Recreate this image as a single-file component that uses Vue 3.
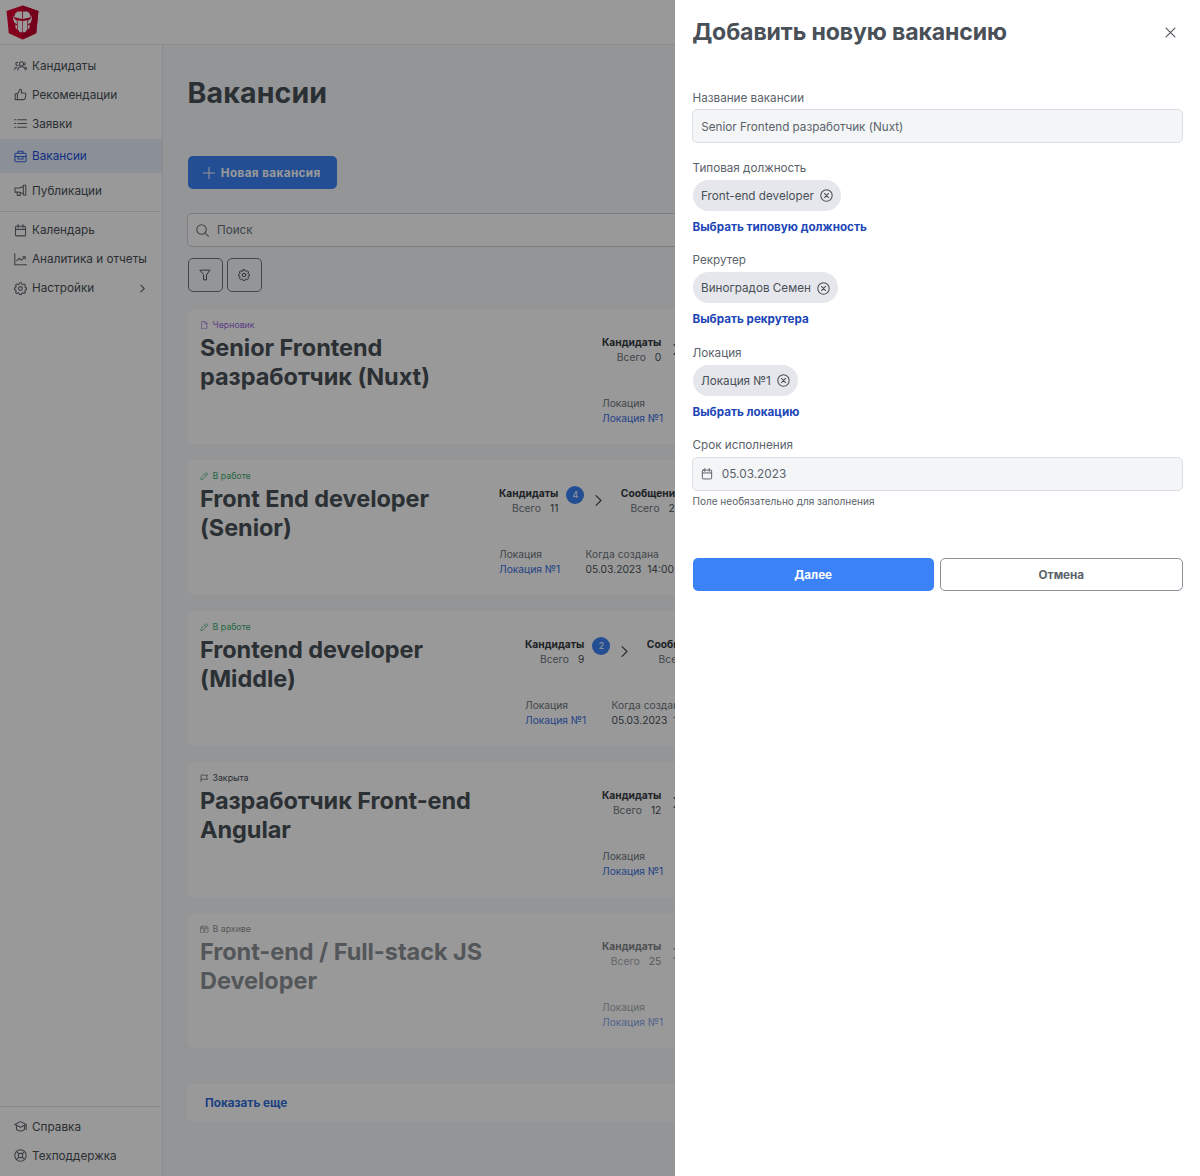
<script setup>
import { h } from 'vue'

const paths = {
  users: '<circle cx="9.200" cy="6" r="2.500"/><path d="M4.600 13.600c0-2.700 1.900-4 4.600-4s4.600 1.300 4.600 4M4.600 4.200a1.900 1.900 0 1 0 .3 3.600M13 4.200a1.900 1.900 0 0 1 0 3.200M3.400 10.200c-1.600.2-2.600 1-2.600 2.600M14 10.200c1 .4 1.500 1.200 1.500 2.200"/>',
  thumb: '<path d="M1.500 7h2.700v7.300H1.500zM4.200 7.400 7.300 1.500c1.500 0 2.200 1 2 2.200L8.900 6.200h4c1.200 0 1.900.9 1.700 2l-.9 4.600c-.2 1-.8 1.500-1.800 1.500H4.200"/>',
  list: '<path d="M4.500 3.500h11M4.500 8h11M4.500 12.500h11M.8 3.500h1.400M.8 8h1.400M.8 12.500h1.400"/>',
  briefcase: '<rect x="1.200" y="4" width="13.600" height="10.500" rx="1.300"/><path d="M5 4V1.500h6V4M1.200 8h13.600M5 8v3h6V8"/>',
  megaphone: '<path d="M11.500 3 6.500 5H1.200v5h5.300l5 2zM11.500 1.500h3v12h-3zM3.500 10l.8 4h3.400V10.400"/>',
  calendar: '<rect x="1.800" y="2.800" width="12.400" height="11.800" rx="1.200"/><path d="M1.800 6.600h12.400M5 .8v3.600M11 .8v3.600"/>',
  chart: '<path d="M1 1v13.500h14.500M3.500 9.500l3-3 2.800 2.300 4.200-4M10.800 4.500h3v3"/>',
  cog: '<circle cx="8" cy="8" r="2.300"/><path d="M6.800 1h2.400l.5 1.700 1.200.5 1.600-.9 1.700 1.700-.9 1.600.5 1.200 1.700.5v1.900l-1.700.5-.5 1.200.9 1.600-1.700 1.700-1.600-.9-1.200.5-.5 1.700H6.800l-.5-1.700-1.200-.5-1.600.9-1.700-1.700.9-1.600-.5-1.200L.5 9.200V7.300l1.700-.5.5-1.200L1.800 4l1.700-1.700 1.600.9 1.200-.5z"/>',
  cap: '<path d="M8 2 1 5.500 8 9l7-3.500zM3 7v4.500c2.800 2.800 7.200 2.800 10 0V7M15 5.500V12"/>',
  support: '<circle cx="8" cy="8" r="7"/><rect x="5.400" y="5.400" width="5.200" height="5.200" rx="1.800"/><path d="m3.200 3.200 2.700 2.700M12.800 3.200l-2.700 2.700M3.200 12.800l2.700-2.700M12.800 12.800l-2.700-2.700"/>',
  chevron: '<path d="m5 2 6 6-6 6"/>',
  plus: '<path d="M8 .5v15M.5 8h15"/>',
  search: '<circle cx="6.800" cy="6.800" r="5.800"/><path d="m11 11 4.300 4.300"/>',
  filter: '<path d="M1.500 1.500h13L9.900 8v6.500H6.100V8z"/>',
  file: '<path d="M9.500 1.200H3v13.600h10V4.700zM9 1.500V5h4"/>',
  pencil: '<path d="M2 14l.7-4L10.500 2.200c1-.9 2.200-.8 3 .1.900.9.900 2 .1 2.900L5.800 13.200zM8.800 4l3 3"/>',
  flag: '<path d="M2 15V2c4-1.500 6.500 1.500 12 0l-2 4 2 4c-5.500 1.500-8-1.500-12 0"/>',
  archive: '<rect x="1" y="3.600" width="14" height="11" rx="1"/><path d="M1 7h14M4.500 1v4M11.500 1v4M8 7v5M6 10l2 2 2-2"/>',
  times: '<path d="m1.500 1.500 13 13M14.500 1.500l-13 13"/>',
  timesCircle: '<circle cx="8" cy="8" r="7"/><path d="m5.500 5.500 5 5M10.500 5.500l-5 5"/>'
}

const Icon = (props) =>
  h('svg', { class: 'icon', viewBox: '0 0 16 16', innerHTML: paths[props.name] })
Icon.props = ['name']

const mainNav = [
  { icon: 'users', text: 'Кандидаты' },
  { icon: 'thumb', text: 'Рекомендации' },
  { icon: 'list', text: 'Заявки' },
  { icon: 'briefcase', text: 'Вакансии', active: true },
  { icon: 'megaphone', text: 'Публикации' }
]
const extraNav = [
  { icon: 'calendar', text: 'Календарь' },
  { icon: 'chart', text: 'Аналитика и отчеты' },
  { icon: 'cog', text: 'Настройки', nested: true }
]
const helpNav = [
  { icon: 'cap', text: 'Справка' },
  { icon: 'support', text: 'Техподдержка' }
]

const vacancies = [
  { status: 'draft', icon: 'file', label: 'Черновик', title: ['Senior Frontend', 'разработчик (Nuxt)'], total: 0 },
  { status: 'work', icon: 'pencil', label: 'В работе', title: ['Front End developer', '(Senior)'], total: 11, fresh: 4, messages: 25, size: 'wide' },
  { status: 'work', icon: 'pencil', label: 'В работе', title: ['Frontend developer', '(Middle)'], total: 9, fresh: 2, messages: 12, size: 'medium' },
  { status: 'closed', icon: 'flag', label: 'Закрыта', title: ['Разработчик Front-end', 'Angular'], total: 12 },
  { status: 'archived', icon: 'archive', label: 'В архиве', title: ['Front-end / Full-stack JS', 'Developer'], total: 25 }
]

const pickers = [
  { label: 'Типовая должность', value: 'Front-end developer', action: 'Выбрать типовую должность' },
  { label: 'Рекрутер', value: 'Виноградов Семен', action: 'Выбрать рекрутера' },
  { label: 'Локация', value: 'Локация №1', action: 'Выбрать локацию' }
]
</script>

<template>
  <div class="app">
    <header class="topbar">
      <svg class="logo" viewBox="0 0 32 34">
        <path fill="#dd0031" d="M16 .5 31.500 5.800 29.300 27.500 16 33.500 2.700 27.500.5 5.800z" />
        <path fill="#c3002f" d="M16 .5 31.500 5.800 29.300 27.500 16 33.500z" />
        <path fill="#fff" d="M15.600 6.300v7.200L8 12l.8-3.600 2.400-2.100zM16.400 6.300v7.200L24 12l-.8-3.600-2.400-2.100zM7.200 9.800l.7 3.400 2.700 2v3.400l-2.500-1.300-1.200-3.500zM24.800 9.800l-.7 3.400-2.700 2v3.400l2.500-1.300 1.200-3.500zM11.300 14.700l4.400.8v11h-2.200l-2.200-2.600zM20.700 14.700l-4.400.8v11h2.200l2.200-2.600zM9 19l1.700 1v3.500l-1.400-1zM23 19l-1.700 1v3.500l1.400-1z" />
      </svg>
    </header>
    <div class="body">
      <aside class="sidebar">
        <nav class="group first">
          <a v-for="n in mainNav" :key="n.text" class="nav" :class="{ active: n.active }"><Icon :name="n.icon" />{{ n.text }}</a>
        </nav>
        <nav class="group">
          <a v-for="n in extraNav" :key="n.text" class="nav"><Icon :name="n.icon" />{{ n.text }}<Icon v-if="n.nested" class="more" name="chevron" /></a>
        </nav>
        <nav class="group bottom">
          <a v-for="n in helpNav" :key="n.text" class="nav"><Icon :name="n.icon" />{{ n.text }}</a>
        </nav>
      </aside>
      <main class="content">
        <h1>Вакансии</h1>
        <button class="create"><Icon name="plus" />Новая вакансия</button>
        <div class="search"><Icon name="search" />Поиск</div>
        <div class="tools">
          <button class="tool"><Icon name="filter" /></button>
          <button class="tool"><Icon name="cog" /></button>
        </div>
        <section class="cards">
          <article v-for="v in vacancies" :key="v.title[0]" class="card" :class="[v.status, v.size]">
            <div class="info">
              <div class="status"><Icon :name="v.icon" />{{ v.label }}</div>
              <h2><span v-for="line in v.title" :key="line">{{ line }}</span></h2>
            </div>
            <div class="details">
              <div class="stages">
                <div class="stage"><b>Кандидаты</b><span>Всего<i>{{ v.total }}</i></span></div>
                <em v-if="v.fresh" class="badge">{{ v.fresh }}</em>
                <Icon name="chevron" class="next" />
                <div v-if="v.fresh" class="stage"><b>Сообщения</b><span>Всего<i>{{ v.messages }}</i></span></div>
              </div>
              <div class="facts">
                <div class="fact"><span>Локация</span><a>Локация №1</a></div>
                <div v-if="v.fresh" class="fact"><span>Когда создана</span><p>05.03.2023&nbsp; 14:00</p></div>
              </div>
            </div>
          </article>
        </section>
        <div class="show-more">Показать еще</div>
      </main>
    </div>

    <div class="mask">
      <section class="drawer">
        <div class="drawer-head"><h3>Добавить новую вакансию</h3><Icon name="times" /></div>
        <label>Название вакансии</label>
        <div class="input">Senior Frontend разработчик (Nuxt)</div>
        <div v-for="p in pickers" :key="p.label" class="picker">
          <label>{{ p.label }}</label>
          <div class="chip">{{ p.value }}<Icon name="timesCircle" /></div>
          <a class="pick">{{ p.action }}</a>
        </div>
        <label class="due">Срок исполнения</label>
        <div class="input date"><Icon name="calendar" />05.03.2023</div>
        <small>Поле необязательно для заполнения</small>
        <div class="actions">
          <button class="primary">Далее</button>
          <button class="secondary">Отмена</button>
        </div>
      </section>
    </div>
  </div>
</template>

<style>
body { margin: 0; }
.icon { width: 12px; height: 12px; flex: none; fill: none; stroke: currentColor; stroke-width: 1.3; stroke-linecap: round; stroke-linejoin: round; }
</style>

<style scoped>
.app { position: relative; width: 1200px; height: 1176px; overflow: hidden; display: flex; flex-direction: column; background: #fff; color: #495057; font: 11.7px/16px Inter, "Liberation Sans", sans-serif; }
* { box-sizing: border-box; }
h1, h2, h3, p { margin: 0; }
button { font: inherit; letter-spacing: inherit; color: inherit; }
.topbar { height: 45px; flex: none; border-bottom: 1px solid #e4e7ea; padding: 5px 6px; }
.logo { display: block; width: 33px; height: 35px; }
.body { display: flex; flex: 1; min-height: 0; }
.sidebar { width: 163px; flex: none; border-right: 1px solid #e6e9ed; display: flex; flex-direction: column; }
.group { width: 160px; display: flex; flex-direction: column; padding: 3.5px 0 0; border-top: 1px solid #dee2e6; }
.group.first { border: 0; padding: 6px 0 6px; }
.group.bottom { margin-top: auto; padding: 5px 0 6px; }
.nav { height: 29px; display: flex; align-items: center; gap: 5px; padding-left: 14px; font-size: 11.75px; }
.nav.active { height: 34px; margin: 1px 0 3px; width: 162px; background: #e6effd; color: #1d4ed8; }
.nav .icon { width: 13px; height: 13px; opacity: .85; }
.nav .more { width: 9px; height: 9px; margin-left: auto; margin-right: 13px; stroke-width: 2; }
.content { flex: 1; min-width: 0; background: #f7f9fb; padding: 30px 24px 0; display: flex; flex-direction: column; align-items: flex-start; }
h1 { font-size: 28.5px; line-height: 36px; font-weight: 700; letter-spacing: .15px; padding-left: .5px; }
.create { margin: 45px 0 0 .5px; width: 149px; height: 33px; border: 0; border-radius: 5px; background: #3b82f6; color: #fff; font-weight: 700; letter-spacing: .4px; display: flex; align-items: center; justify-content: center; gap: 5.5px; padding: 0; }
.search { margin-top: 24px; width: 100%; height: 34px; border: 1px solid #ced4da; border-radius: 5px; background: #fff; color: #6c757d; display: flex; align-items: center; gap: 8px; padding-left: 8px; line-height: 17px; }
.search .icon { width: 13px; height: 13px; }
.tools { display: flex; gap: 4px; margin-top: 11px; padding-left: .5px; }
.tool { width: 35px; height: 34px; border: 1px solid #6c757d; border-radius: 5px; background: none; display: grid; place-items: center; padding: 0; }
.cards { width: 100%; display: flex; flex-direction: column; gap: 16px; margin-top: 17px; padding-left: .5px; }
.card { height: 135px; border-radius: 6px; background: #fff; display: flex; overflow: hidden; }
.info { width: 414.5px; flex: none; padding: 8px 0 0 12.5px; }
.wide .info { width: 311.5px; }
.medium .info { width: 337.5px; }
.status { display: flex; align-items: center; gap: 4px; font-size: 8.8px; line-height: 16px; }
.status .icon { width: 8.5px; height: 8.5px; }
.draft .status { color: #9a6be0; }
.work .status { color: #3fae72; }
h2 { font-size: 23.5px; line-height: 28.4px; font-weight: 700; letter-spacing: -.05px; display: flex; flex-direction: column; white-space: nowrap; padding-top: 1.2px; }
.details { padding-top: 26px; font-size: 10.25px; line-height: 15px; flex: none; }
.stages { display: flex; height: 61px; align-items: flex-start; }
.stage { display: flex; flex-direction: column; align-items: flex-end; }
.stage b { font-weight: 700; color: #343a40; }
.stage span, .fact span { color: #6c757d; }
.stage i { font-style: normal; color: #495057; margin-left: 9px; }
.badge { width: 18px; height: 18px; margin: 0 0 0 8px; border-radius: 50%; background: #3b82f6; color: #dbeafe; font: 600 8.5px/18px Inter, sans-serif; text-align: center; }
.next { width: 13px; height: 13px; margin: 8px 16px 0 9px; stroke-width: 1.6; }
.badge + .next { margin-left: 7.5px; }
.facts { display: flex; white-space: nowrap; }
.fact { width: 86.5px; display: flex; flex-direction: column; }
.fact a { color: #3b6fe0; }
.archived > * { opacity: .62; }
.show-more { margin-top: 36px; width: 100%; height: 38px; border-radius: 6px; background: #fff; padding-left: 18px; line-height: 39px; font-weight: 700; color: #2f6ad9; }

.mask { position: absolute; inset: 0; background: rgba(0, 0, 0, .4); display: flex; justify-content: flex-end; }
.drawer { width: 525px; background: #fff; padding: 16px 17px 0; display: flex; flex-direction: column; }
.drawer-head { display: flex; justify-content: space-between; align-items: center; height: 32px; padding-right: 7px; margin-bottom: 42px; }
.drawer-head .icon { width: 11px; height: 11px; stroke-width: 1.5; }
h3 { font-size: 23.1px; line-height: 32px; font-weight: 700; letter-spacing: -.13px; padding-left: .2px; }
label { padding-left: .5px; line-height: 16px; color: #5a626a; }
.input { height: 34px; margin-top: 3px; border: 1px solid #d9dfe4; border-radius: 5px; background: #f3f5f7; padding: 0 8.3px; line-height: 34px; color: #5a626a; }
.picker { display: flex; flex-direction: column; align-items: flex-start; height: 92.5px; padding: 16.8px 0 0 .5px; }
.picker label { padding: 0; }
.chip { height: 32px; margin: 4px 0 8px; border-radius: 16px; background: #e5e7ec; display: flex; align-items: center; gap: 6px; padding: 1px 8px 0 8.5px; }
.chip .icon { width: 13px; height: 13px; }
.pick { font-weight: 700; color: #1d46b8; font-size: 11.65px; line-height: 17px; }
.due { margin-top: 16px; }
.date { display: flex; align-items: center; gap: 8.5px; margin-top: 4px; font-size: 11.8px; }
small { font-size: 10.03px; line-height: 14px; margin: 3px 0 50px .5px; color: #5a626a; }
.actions { display: flex; gap: 6px; padding-left: .5px; }
.actions button { flex: 1; height: 33px; border-radius: 5px; font-weight: 700; padding: 1px 0 0; }
.primary { background: #3b82f6; color: #fff; border: 0; }
.secondary { background: #fff; border: 1px solid #8a9199; color: #5a626a; }
</style>
